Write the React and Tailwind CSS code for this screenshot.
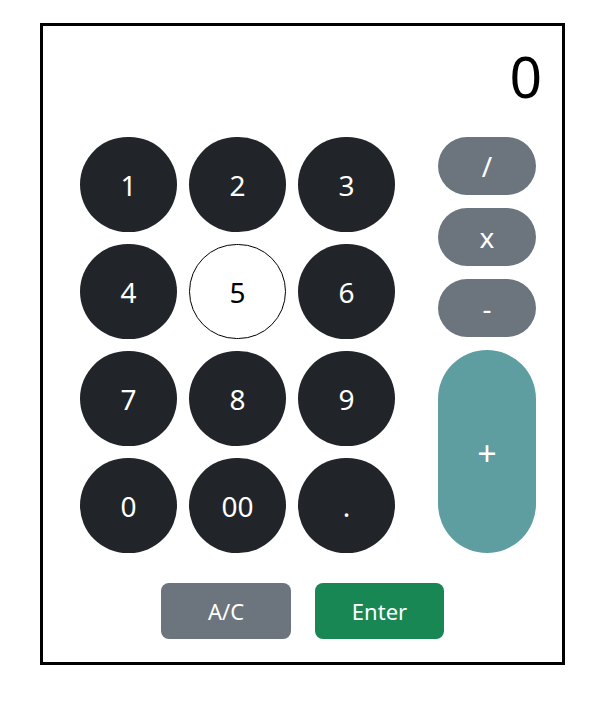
import React, { useState } from 'react';

const keys = ['1', '2', '3', '4', '5', '6', '7', '8', '9', '0', '00', '.'];

const App = () => {
  const [display, setDisplay] = useState('0');

  return (
    <div className="min-h-screen bg-white pt-[23px] pl-[40px]" style={{ fontFamily: '"Noto Sans", "Open Sans", sans-serif' }}>
      <div className="w-[525px] h-[642px] border-[3px] border-black box-border">
        {/* Display */}
        <div className="h-[111px] pt-[22px] pr-[20px] text-right text-[57px] leading-[56px] text-black">
          {display}
        </div>

        {/* Keypad + operators */}
        <div className="flex pl-[37px] gap-[43px]">
          <div className="grid grid-cols-3 gap-x-[12px] gap-y-[12px]">
            {keys.map((k) => (
              <button
                key={k}
                className={
                  k === '5'
                    ? 'w-[97px] h-[95px] rounded-full bg-white border border-black text-black text-[28px]'
                    : 'w-[97px] h-[95px] rounded-full bg-[#212529] text-white text-[28px]'
                }
              >
                {k}
              </button>
            ))}
          </div>

          <div className="flex flex-col gap-[13px]">
            <button className="w-[98px] h-[58px] rounded-full bg-[#6c757d] text-white text-[28px]">/</button>
            <button className="w-[98px] h-[58px] rounded-full bg-[#6c757d] text-white text-[28px]">x</button>
            <button className="w-[98px] h-[58px] rounded-full bg-[#6c757d] text-white text-[28px]">-</button>
            <button className="w-[98px] h-[203px] rounded-full bg-[#5f9ea0] text-white text-[34px] pt-[4px]">+</button>
          </div>
        </div>

        {/* Bottom actions */}
        <div className="flex justify-center gap-[24px] mt-[30px]">
          <button onClick={() => setDisplay('0')} className="w-[130px] h-[56px] rounded-lg bg-[#6c757d] text-white text-[22px]">
            A/C
          </button>
          <button className="w-[129px] h-[56px] rounded-lg bg-[#198754] text-white text-[22px]">
            Enter
          </button>
        </div>
      </div>
    </div>
  );
};

export default App;
